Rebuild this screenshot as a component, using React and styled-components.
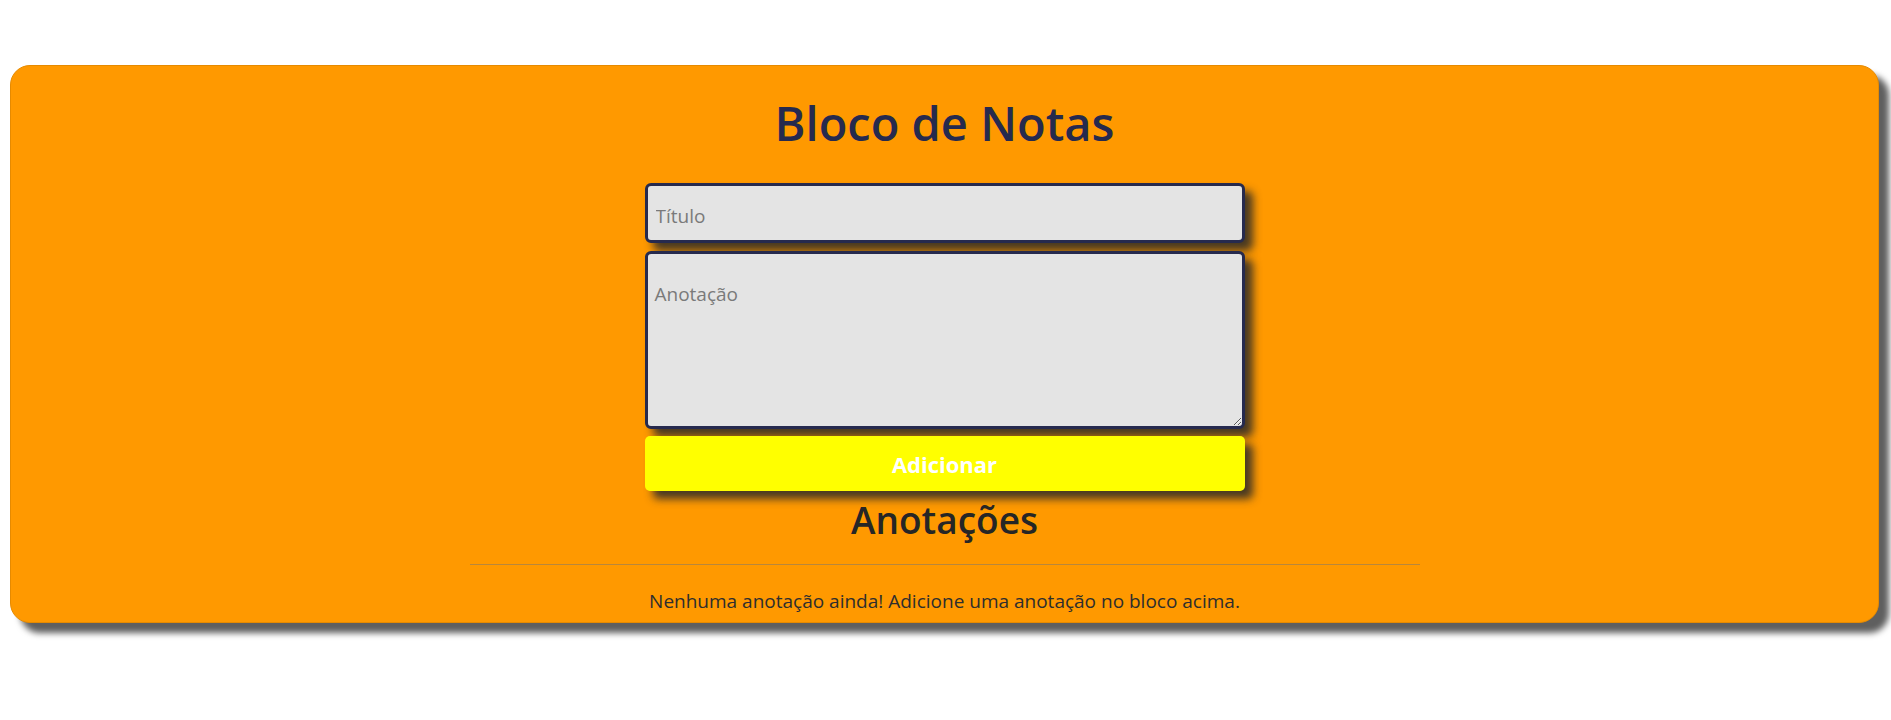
import React, { useState } from "react";
import styled, { createGlobalStyle } from "styled-components";

const GlobalStyle = createGlobalStyle`
  html, body {
    margin: 0;
    padding: 0;
    background: #ffffff;
    font-family: "Open Sans", "Noto Sans", Arial, sans-serif;
  }
  * { box-sizing: border-box; }
`;

const Page = styled.div`
  padding: 65px 12px 40px 10px;
`;

const Card = styled.main`
  display: flex;
  flex-direction: column;
  align-items: center;
  background: #ff9900;
  border: 1px solid #e68a00;
  border-radius: 20px;
  box-shadow: 10px 10px 6px #5f5f5f;
  padding: 0 0 9px;
`;

const Title = styled.h1`
  margin: 33px 0 0;
  font-size: 47px;
  line-height: 48px;
  font-weight: 600;
  color: #262a4e;
`;

const Form = styled.form`
  width: 600px;
  margin-top: 36px;
  display: flex;
  flex-direction: column;
`;

const fieldBase = `
  width: 100%;
  border: 3px solid #262a4e;
  border-radius: 6px;
  background: #e4e4e4;
  box-shadow: 8px 8px 8px rgba(40, 40, 40, 0.85);
  font-family: "Open Sans", "Noto Sans", Arial, sans-serif;
  font-size: 19px;
  color: #333;
  outline: none;
  &::placeholder { color: #7a7a7a; }
`;

const TitleInput = styled.input`
  ${fieldBase}
  height: 60px;
  padding: 6px 8px 0;
`;

const NoteArea = styled.textarea`
  ${fieldBase}
  height: 178px;
  margin-top: 8px;
  padding: 28px 7px 8px;
  line-height: 24px;
  resize: vertical;
`;

const AddButton = styled.button`
  margin-top: 7px;
  height: 55px;
  width: 100%;
  border: none;
  border-radius: 5px;
  background: #ffff00;
  color: #ffffff;
  font-family: "Open Sans", "Noto Sans", Arial, sans-serif;
  font-size: 22px;
  font-weight: 700;
  box-shadow: 8px 8px 8px rgba(40, 40, 40, 0.85);
  cursor: pointer;
`;

const SectionTitle = styled.h2`
  margin: 11px 0 0;
  font-size: 37px;
  line-height: 36px;
  font-weight: 600;
  color: #262626;
`;

const Divider = styled.hr`
  width: 950px;
  margin: 26px 0 0;
  border: none;
  border-top: 1px solid #b8873c;
`;

const Empty = styled.p`
  margin: 24px 0 0;
  font-size: 19px;
  line-height: 24px;
  color: #2e2e2e;
`;

export default function App() {
  const [title, setTitle] = useState("");
  const [note, setNote] = useState("");
  return (
    <>
      <GlobalStyle />
      <Page>
        <Card>
          <Title>Bloco de Notas</Title>
          <Form onSubmit={(e) => e.preventDefault()}>
            <TitleInput
              placeholder="Título"
              value={title}
              onChange={(e) => setTitle(e.target.value)}
            />
            <NoteArea
              placeholder="Anotação"
              value={note}
              onChange={(e) => setNote(e.target.value)}
            />
            <AddButton type="submit">Adicionar</AddButton>
          </Form>
          <SectionTitle>Anotações</SectionTitle>
          <Divider />
          <Empty>Nenhuma anotação ainda! Adicione uma anotação no bloco acima.</Empty>
        </Card>
      </Page>
    </>
  );
}
